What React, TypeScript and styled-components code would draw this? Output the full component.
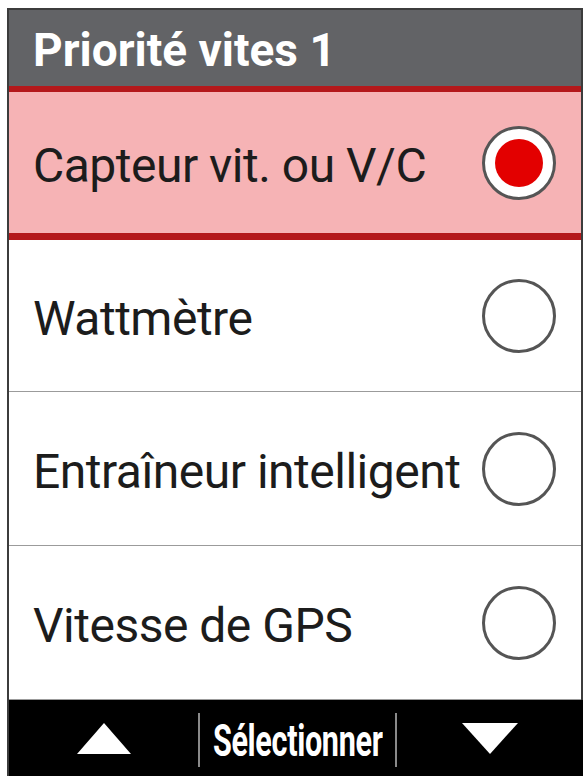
import React from "react";
import styled, { createGlobalStyle } from "styled-components";

const GlobalStyle = createGlobalStyle`
  html, body {
    margin: 0;
    padding: 0;
    background: #ffffff;
  }
  body {
    font-family: Roboto, "Liberation Sans", sans-serif;
  }
`;

const Page = styled.div`
  width: 587px;
  height: 776px;
  overflow: hidden;
  padding: 8px 0 0 7px;
  box-sizing: border-box;
`;

const Screen = styled.div`
  width: 576px;
  height: 768px;
  box-sizing: border-box;
  border: 2px solid #3c3c3c;
  border-bottom: none;
  display: flex;
  flex-direction: column;
  background: #ffffff;
`;

const Header = styled.div`
  height: 76px;
  flex: none;
  background: #626366;
  color: #ffffff;
  font-weight: 700;
  font-size: 46px;
  display: flex;
  align-items: center;
  padding: 4px 0 0 24px;
  box-sizing: border-box;
`;

const Row = styled.div<{ $selected?: boolean; $height: number }>`
  height: ${(p) => p.$height}px;
  flex: none;
  box-sizing: border-box;
  display: flex;
  align-items: center;
  justify-content: space-between;
  padding: 5px 25px 0 24px;
  background: ${(p) => (p.$selected ? "#f6b3b5" : "#ffffff")};
  border-top: ${(p) => (p.$selected ? "6px solid #b4181b" : "none")};
  border-bottom: ${(p) =>
    p.$selected ? "7px solid #b4181b" : "1.5px solid #9b9b9b"};
`;

const Label = styled.span`
  font-size: 48px;
  color: #1c1c1c;
  white-space: nowrap;
  letter-spacing: -0.5px;
`;

const Radio = styled.span<{ $checked?: boolean }>`
  width: 74px;
  height: 74px;
  flex: none;
  box-sizing: border-box;
  border-radius: 50%;
  border: 3px solid #555555;
  background: #ffffff;
  display: flex;
  align-items: center;
  justify-content: center;
  margin-top: -5px;
  &::after {
    content: "";
    display: ${(p) => (p.$checked ? "block" : "none")};
    width: 48px;
    height: 48px;
    border-radius: 50%;
    background: #e30000;
  }
`;

const Footer = styled.div`
  flex: 1;
  background: #000000;
  display: grid;
  grid-template-columns: 189px 199px 1fr;
  align-items: center;
  margin-right: -2px;
`;

const Arrow = styled.div`
  display: flex;
  justify-content: center;
  align-items: center;
`;

const SelectCell = styled.div`
  height: 54px;
  margin-top: 4px;
  border-left: 2px solid #8a8a8a;
  border-right: 2px solid #8a8a8a;
  display: flex;
  align-items: center;
  justify-content: center;
  overflow: visible;
  min-width: 0;
`;

const SelectText = styled.span`
  display: inline-block;
  color: #ffffff;
  font-weight: 700;
  font-size: 45px;
  transform: scaleX(0.68);
  white-space: nowrap;
  letter-spacing: -0.5px;
`;

const options = [
  { label: "Capteur vit. ou V/C", height: 154, selected: true },
  { label: "Wattmètre", height: 152, selected: false },
  { label: "Entraîneur intelligent", height: 154, selected: false },
  { label: "Vitesse de GPS", height: 154, selected: false },
];

const App = () => {
  return (
    <>
      <GlobalStyle />
      <Page>
        <Screen>
          <Header>Priorité vites 1</Header>
          {options.map((o) => (
            <Row key={o.label} $selected={o.selected} $height={o.height}>
              <Label>{o.label}</Label>
              <Radio $checked={o.selected} />
            </Row>
          ))}
          <Footer>
            <Arrow>
              <svg width="54" height="31" viewBox="0 0 54 31">
                <polygon points="27,0 54,31 0,31" fill="#ffffff" />
              </svg>
            </Arrow>
            <SelectCell>
              <SelectText>Sélectionner</SelectText>
            </SelectCell>
            <Arrow>
              <svg width="56" height="31" viewBox="0 0 56 31">
                <polygon points="0,0 56,0 28,31" fill="#ffffff" />
              </svg>
            </Arrow>
          </Footer>
        </Screen>
      </Page>
    </>
  );
};

export default App;
